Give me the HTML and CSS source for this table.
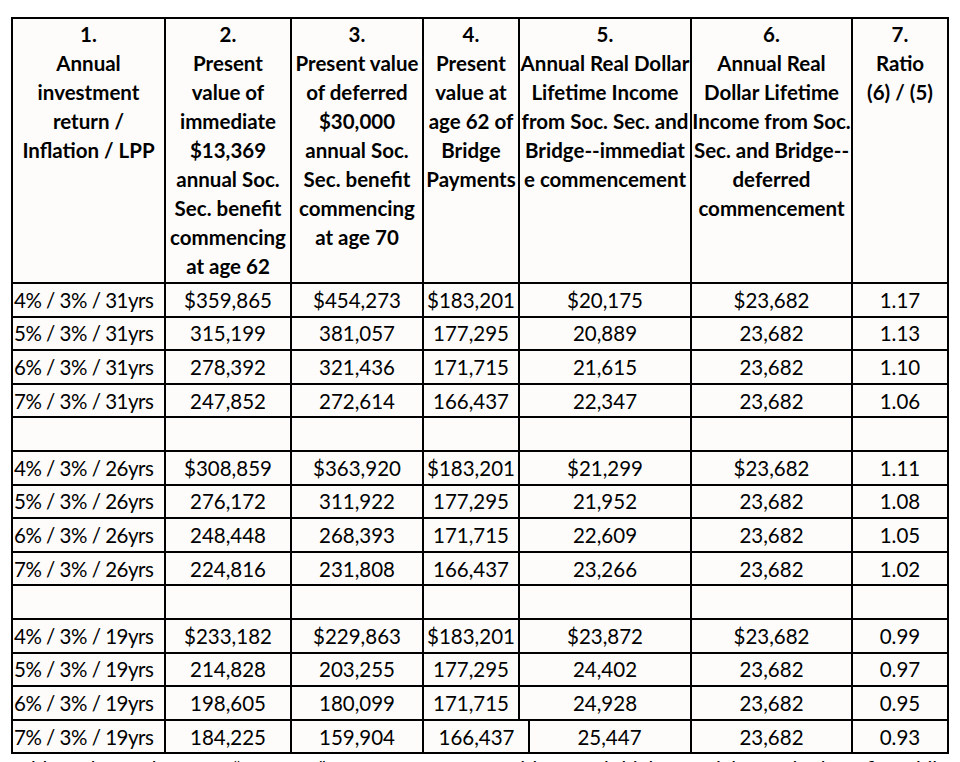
FILE: index.html
```html
<!DOCTYPE html>
<html lang="en">
<head>
<meta charset="utf-8">
<title>Table</title>
<link rel="stylesheet" href="styles.css">
</head>
<body>
<table class="grid">
  <colgroup>
    <col class="c1"><col class="c2"><col class="c3"><col class="c4"><col class="c5"><col class="c6"><col class="c7">
  </colgroup>
  <thead>
    <tr class="head">
      <th>1.<br>Annual<br>investment<br>return /<br>Inflation / LPP</th>
      <th>2.<br>Present<br>value of<br>immediate<br>$13,369<br>annual Soc.<br>Sec. benefit<br>commencing<br>at age 62</th>
      <th>3.<br>Present value<br>of deferred<br>$30,000<br>annual Soc.<br>Sec. benefit<br>commencing<br>at age 70</th>
      <th>4.<br>Present<br>value at<br>age 62 of<br>Bridge<br>Payments</th>
      <th>5.<br>Annual Real Dollar<br>Lifetime Income<br>from Soc. Sec. and<br>Bridge--immediat<br>e commencement</th>
      <th>6.<br>Annual Real<br>Dollar Lifetime<br>Income from Soc.<br>Sec. and Bridge--<br>deferred<br>commencement</th>
      <th>7.<br>Ratio<br>(6) / (5)</th>
    </tr>
  </thead>
  <tbody>
    <tr><td class="label">4% / 3% / 31yrs</td><td>$359,865</td><td>$454,273</td><td>$183,201</td><td>$20,175</td><td>$23,682</td><td>1.17</td></tr>
    <tr><td class="label">5% / 3% / 31yrs</td><td>315,199</td><td>381,057</td><td>177,295</td><td>20,889</td><td>23,682</td><td>1.13</td></tr>
    <tr><td class="label">6% / 3% / 31yrs</td><td>278,392</td><td>321,436</td><td>171,715</td><td>21,615</td><td>23,682</td><td>1.10</td></tr>
    <tr><td class="label">7% / 3% / 31yrs</td><td>247,852</td><td>272,614</td><td>166,437</td><td>22,347</td><td>23,682</td><td>1.06</td></tr>
    <tr><td></td><td></td><td></td><td></td><td></td><td></td><td></td></tr>
    <tr><td class="label">4% / 3% / 26yrs</td><td>$308,859</td><td>$363,920</td><td>$183,201</td><td>$21,299</td><td>$23,682</td><td>1.11</td></tr>
    <tr><td class="label">5% / 3% / 26yrs</td><td>276,172</td><td>311,922</td><td>177,295</td><td>21,952</td><td>23,682</td><td>1.08</td></tr>
    <tr><td class="label">6% / 3% / 26yrs</td><td>248,448</td><td>268,393</td><td>171,715</td><td>22,609</td><td>23,682</td><td>1.05</td></tr>
    <tr><td class="label">7% / 3% / 26yrs</td><td>224,816</td><td>231,808</td><td>166,437</td><td>23,266</td><td>23,682</td><td>1.02</td></tr>
    <tr><td></td><td></td><td></td><td></td><td></td><td></td><td></td></tr>
    <tr><td class="label">4% / 3% / 19yrs</td><td>$233,182</td><td>$229,863</td><td>$183,201</td><td>$23,872</td><td>$23,682</td><td>0.99</td></tr>
    <tr><td class="label">5% / 3% / 19yrs</td><td>214,828</td><td>203,255</td><td>177,295</td><td>24,402</td><td>23,682</td><td>0.97</td></tr>
    <tr><td class="label">6% / 3% / 19yrs</td><td>198,605</td><td>180,099</td><td>171,715</td><td>24,928</td><td>23,682</td><td>0.95</td></tr>
    <tr class="last"><td class="label">7% / 3% / 19yrs</td><td>184,225</td><td>159,904</td><td class="wide">166,437</td><td class="shifted">25,447</td><td>23,682</td><td>0.93</td></tr>
  </tbody>
</table>
<p class="note">Table 2 shows the same “62 to 70” 2030 for someone with a much higher Social Security benefit. While the present values differ, the ratio pattern between immediate and deferred commencement holds across return assumptions.</p>
</body>
</html>
```
FILE: styles.css
```css
html, body {
  background: #ffffff;
}
body {
  margin: 0;
  padding: 17px 12px 0 11px;
  font-family: Lato, "Liberation Sans", sans-serif;
  color: #000;
}
.grid {
  border-collapse: collapse;
  table-layout: fixed;
  width: 937px;
  background: #fdfcfa;
}
.c1 { width: 153px; }
.c2 { width: 126px; }
.c3 { width: 132px; }
.c4 { width: 96px; }
.c5 { width: 172px; }
.c6 { width: 161px; }
.c7 { width: 96px; }
.grid th,
.grid td {
  border: 2px solid #000;
  padding: 0;
  font-size: 20.5px;
  white-space: nowrap;
  overflow: visible;
}
.grid th {
  font-weight: 700;
  line-height: 29px;
  vertical-align: top;
  text-align: center;
  padding-top: 1px;
}
.head {
  height: 265px;
}
.grid td {
  height: 31.6px;
  line-height: 24px;
  text-align: center;
  vertical-align: middle;
}
.grid td.label {
  text-align: left;
  padding-left: 1px;
  letter-spacing: -0.5px;
}
.last td.wide {
  padding-left: 10px;
  border-right-style: hidden;
}
.last td.shifted {
  padding-left: 10px;
  border-left-style: hidden;
  background: linear-gradient(to right, transparent 9px, #000 9px, #000 11px, transparent 11px);
}
.note {
  width: 937px;
  margin: 2px 0 0;
  font-size: 20.5px;
  line-height: 26px;
  text-align: justify;
}
```
